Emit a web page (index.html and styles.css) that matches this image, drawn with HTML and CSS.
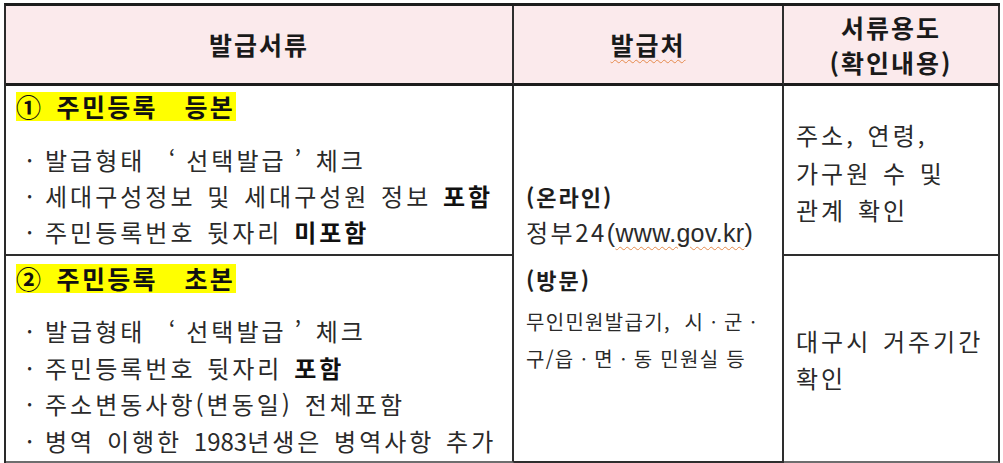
FILE: index.html
```html
<!DOCTYPE html>
<html lang="ko">
<head>
<meta charset="utf-8">
<title>발급서류 안내</title>
<link rel="stylesheet" href="styles.css">
</head>
<body>
<table class="doc-table">
  <colgroup>
    <col class="col-docs">
    <col class="col-place">
    <col class="col-purpose">
  </colgroup>
  <thead>
    <tr class="head-row">
      <th>발급서류</th>
      <th><span class="squiggle">발급처</span></th>
      <th class="purpose-head">서류용도<br>(확인내용)</th>
    </tr>
  </thead>
  <tbody>
    <tr class="row-a">
      <td class="docs-cell">
        <div class="doc-title"><span class="mark">① 주민등록&nbsp; 등본</span></div>
        <ul class="doc-list">
          <li><span class="dot">·</span>발급형태&nbsp; ‘&thinsp;선택발급&thinsp;’ 체크</li>
          <li><span class="dot">·</span>세대구성정보 및 세대구성원 정보 <b>포함</b></li>
          <li><span class="dot">·</span>주민등록번호 뒷자리 <b>미포함</b></li>
        </ul>
      </td>
      <td class="place-cell" rowspan="2">
        <div class="place-title">(온라인)</div>
        <div class="gov-line">정부24<span class="url">(<span class="squiggle">www.gov.kr</span>)</span></div>
        <div class="place-title place-title--visit">(방문)</div>
        <div class="place-text">무인민원발급기,&nbsp; 시ㆍ군ㆍ<br>구/읍ㆍ면ㆍ동 민원실 등</div>
      </td>
      <td class="purpose-cell purpose-cell--a">주소, 연령,<br>가구원 수 및<br>관계 확인</td>
    </tr>
    <tr class="row-b">
      <td class="docs-cell docs-cell--b">
        <div class="doc-title"><span class="mark">② 주민등록&nbsp; 초본</span></div>
        <ul class="doc-list doc-list--b">
          <li><span class="dot">·</span>발급형태&nbsp; ‘&thinsp;선택발급&thinsp;’ 체크</li>
          <li><span class="dot">·</span>주민등록번호 뒷자리 <b>포함</b></li>
          <li><span class="dot">·</span>주소변동사항(변동일) 전체포함</li>
          <li><span class="dot">·</span>병역 이행한 <span class="num">1983</span>년생은 병역사항 추가</li>
        </ul>
      </td>
      <td class="purpose-cell">대구시 거주기간<br>확인</td>
    </tr>
  </tbody>
</table>
</body>
</html>
```

FILE: styles.css
```css
html, body {
  margin: 0;
  padding: 0;
  background: #ffffff;
}

body {
  font-family: "Noto Sans CJK KR", "Noto Sans", sans-serif;
  color: #2a2a2a;
}

.doc-table {
  margin: 3px 0 0 4px;
  width: 996px;
  table-layout: fixed;
  border-collapse: separate;
  border-spacing: 0;
  border-top: 3px solid #1c1c1c;
  border-left: 2px solid #2a2a2a;
}

.col-docs { width: 508px; }
.col-place { width: 270px; }
.col-purpose { width: 216px; }

.doc-table th,
.doc-table td {
  padding: 0;
  border-right: 2px solid #2e2e2e;
  border-bottom: 2px solid #2e2e2e;
  overflow: hidden;
}

.head-row { height: 80px; }
.row-a { height: 170px; }
.row-b { height: 207px; }

.doc-table th {
  background: #fbeaec;
  border-bottom: 3px solid #1c1c1c;
  font-size: 25px;
  font-weight: 700;
  letter-spacing: 2px;
  color: #1a1a1a;
  text-align: center;
  vertical-align: middle;
  line-height: 35px;
}

.row-b td {
  border-bottom-color: #6e6e6e;
}

.squiggle {
  text-decoration: underline wavy #e58a4c;
  text-decoration-thickness: 1px;
  text-underline-offset: 4px;
}

/* first column */
.docs-cell {
  vertical-align: top;
  padding: 6px 0 0 8px !important;
}

.docs-cell--b {
  padding-top: 8px !important;
}

.doc-title {
  margin-left: 2px;
  font-size: 25px;
  font-weight: 700;
  color: #111;
  letter-spacing: 2.3px;
  word-spacing: 4px;
  line-height: 29px;
  height: 29px;
}

.mark {
  display: inline-block;
  vertical-align: top;
  background: #ffff00;
  line-height: 29px;
  padding-right: 1px;
}

.doc-list {
  list-style: none;
  margin: 21px 0 0 0;
  padding: 0;
  font-size: 24px;
  letter-spacing: 3px;
  word-spacing: 2px;
  line-height: 36px;
  white-space: nowrap;
}

.doc-list--b {
  margin-top: 20px;
  line-height: 36.6px;
}

.doc-list b {
  font-weight: 700;
  color: #111;
}

.num {
  letter-spacing: 0;
}

.dot {
  display: inline-block;
  width: 31px;
  text-align: center;
  letter-spacing: 0;
}

/* middle column */
.place-cell {
  vertical-align: middle;
  padding: 7px 0 0 12px !important;
  white-space: nowrap;
}

.place-title {
  font-size: 22px;
  font-weight: 700;
  color: #1e1e1e;
  letter-spacing: 2px;
  line-height: 36px;
}

.place-title--visit {
  margin-top: 11px;
}

.gov-line {
  font-size: 24px;
  letter-spacing: 2.5px;
  line-height: 36px;
}

.url {
  font-family: "Liberation Sans", Arial, sans-serif;
  font-size: 25px;
  letter-spacing: 0.3px;
  line-height: 20px;
}

.place-text {
  font-size: 20px;
  letter-spacing: 1.3px;
  line-height: 37px;
  margin-top: 6px;
}

/* third column */
.purpose-cell {
  vertical-align: middle;
  padding: 0 0 0 12px !important;
  font-size: 24px;
  letter-spacing: 3px;
  word-spacing: 2px;
  line-height: 37px;
  white-space: nowrap;
}

.purpose-cell--a {
  padding-top: 5px !important;
  line-height: 37.5px;
}
```
